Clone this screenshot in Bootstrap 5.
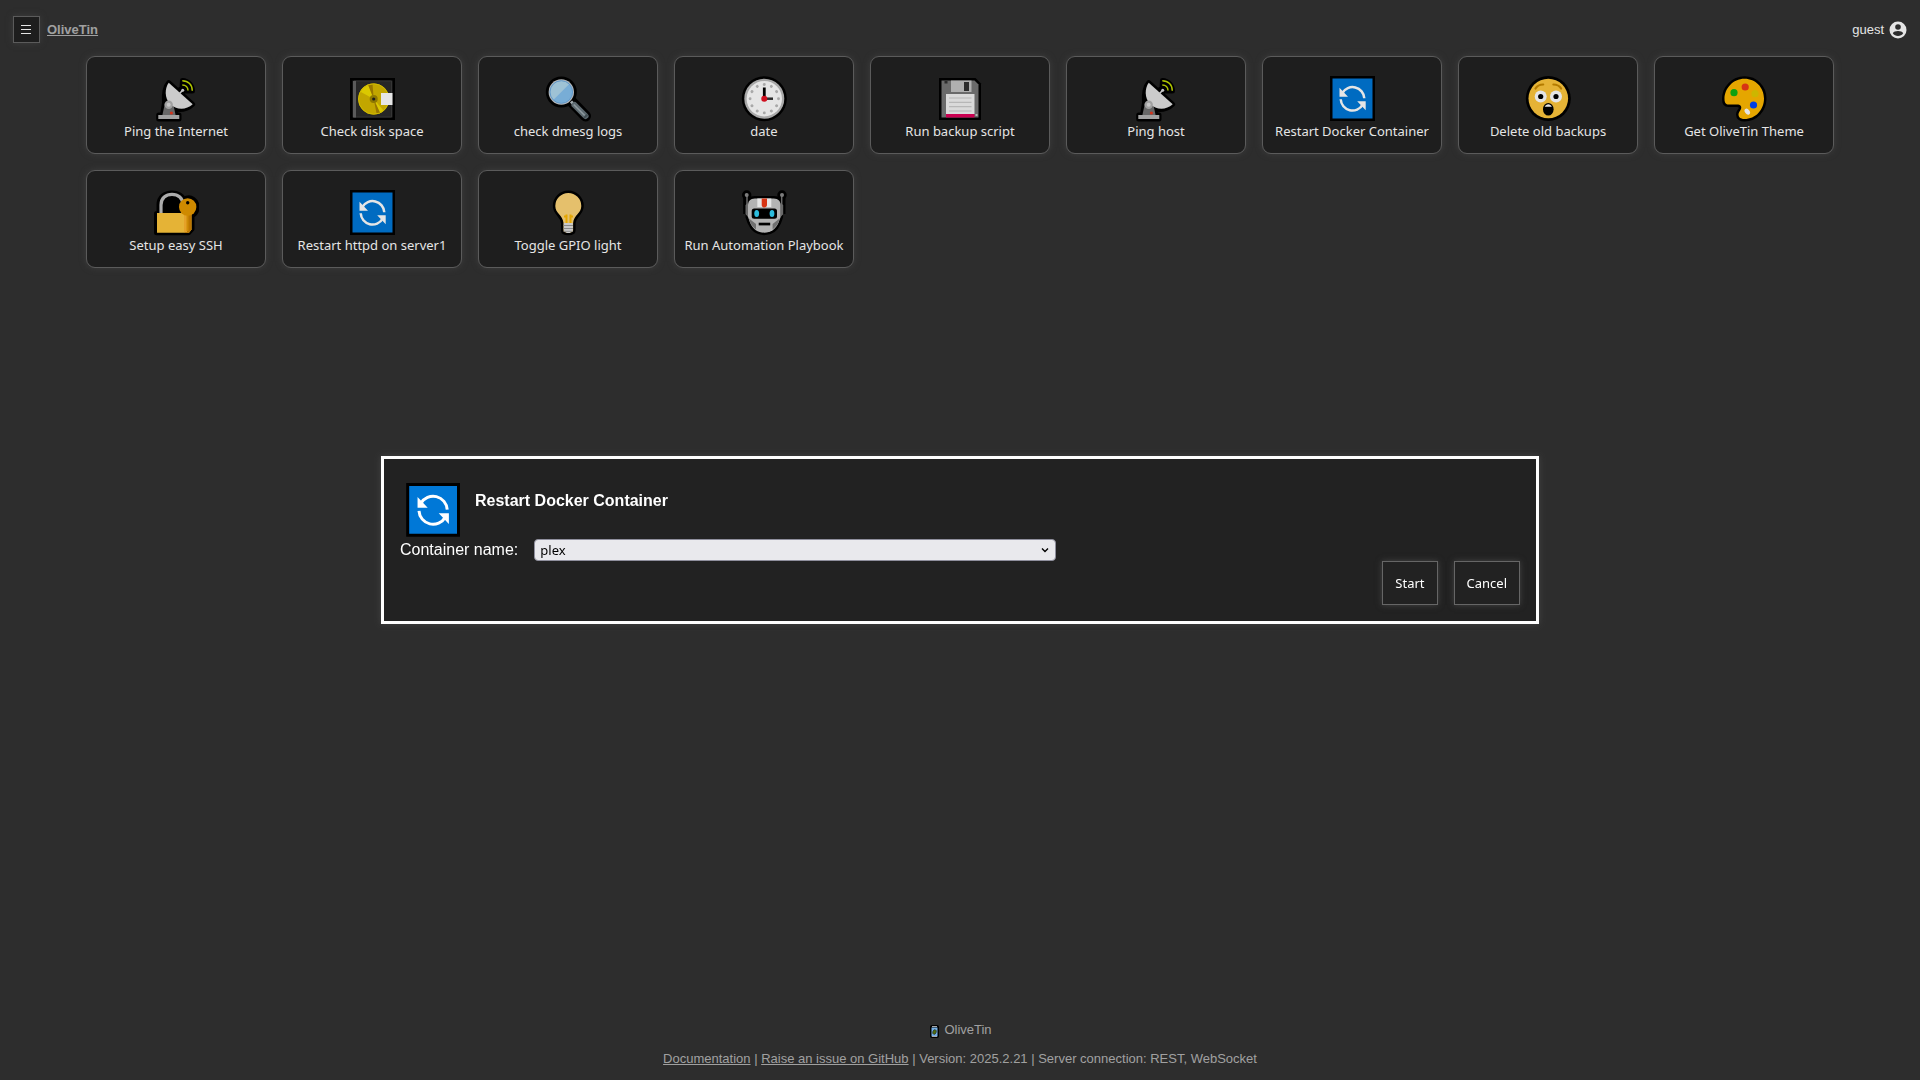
<!DOCTYPE html>
<html lang="en">
<head>
<meta charset="utf-8">
<meta name="viewport" content="width=device-width, initial-scale=1">
<title>OliveTin</title>
<link href="https://cdn.jsdelivr.net/npm/bootstrap@5.3.0/dist/css/bootstrap.min.css" rel="stylesheet">
<style>
  body { background: #333; color: #fff; font: 13px/16px "Liberation Sans", Arial, sans-serif; }
  .site-head { padding: 16px 13px 13px; }
  .ot-btn { background: #222; color: #fff; border: 1px solid #666; box-shadow: 0 0 6px #444; font: 13px/18px "Noto Sans", sans-serif; }
  .menu-btn { width: 27px; height: 27px; padding: 0; }
  .home-group { gap: 7px; }
  .home-link { color: #b3b3b3; }
  .user-info { color: #fff; gap: 5px; }
  .action-grid { display: grid; grid-template-columns: repeat(auto-fill, 180px); gap: 16px; justify-content: center; }
  .action-btn { border-radius: 9px; padding: 19px 4px 13px; }
  .action-btn svg { width: 46px; height: 46px; }
  .page-foot { color: #b3b3b3; padding-bottom: 13px; }
  .page-foot p { margin: 0 0 13px; }
  .page-foot p:last-child { margin: 0; }
  .page-foot a { color: inherit; }
  .dim-layer { background: rgba(0,0,0,.1); }
  .arg-dialog { width: 1158px; max-width: 100%; background: #222; border: 3px solid #fff; box-shadow: 0 0 6px #444; padding: 16px; }
  .dialog-icon { width: 55px; height: 55px; margin: 8px 15px 1px 5px; }
  .arg-dialog h2 { font-size: 16px; line-height: 20px; font-weight: 700; margin: 16px 0 0; }
  .arg-dialog label { font-size: 16px; line-height: 22px; }
  .arg-select {
    width: 522px; height: 22px; padding: 0 20px 0 5px; font: 13px/20px "Noto Sans", sans-serif; color: #000;
    border: 1px solid #8f8f9d; border-radius: 4px; background-color: #e9e9ed; background-position: right 6px center; background-size: 8px 8px;
    --bs-form-select-bg-img: url("data:image/svg+xml,%3Csvg xmlns='http://www.w3.org/2000/svg' viewBox='0 0 8 8'%3E%3Cpath d='M1 2.5l3 3 3-3' fill='none' stroke='%23000' stroke-width='1.4'/%3E%3C/svg%3E");
  }
  .dialog-btn { padding: 12px; }
</style>
<script src="https://cdn.jsdelivr.net/npm/bootstrap@5.3.0/dist/js/bootstrap.bundle.min.js"></script>
</head>
<body class="d-flex flex-column min-vh-100">

<svg class="d-none" aria-hidden="true">
  <symbol id="ic-dish" viewBox="0 0 46 46">
    <g stroke="#000" stroke-width="5" stroke-linejoin="round" fill="#000">
      <path d="M15.7 6.7 39.7 28.3C34 34 27 34 22 33.3L23 39H26v4H5.700v-4H9.500l2-12C11 20 11 12 15.700 6.700z"/>
      <path d="M29.500 4.500A10.500 10.500 0 0 1 39.500 15H31l-4 4-3-3 5-4z"/>
    </g>
    <path d="M12 27h8l2.700 12.500H9.300z" fill="#737373"/>
    <path d="M5.300 39h21v4h-21z" fill="#b5b5b5"/>
    <path d="M15.700 6.700 39.700 28.300C33 34.500 23 34 17 28 11.500 22 11.500 12.500 15.700 6.700z" fill="#e2e2e2"/>
    <circle cx="15.700" cy="28.700" r="4.200" fill="#b4b4b4"/><circle cx="15.700" cy="28.700" r="2" fill="#dedede"/>
    <circle cx="18.400" cy="37" r="1.600" fill="#e83a22"/>
    <path d="m26.500 17.500 3-3" stroke="#ddd" stroke-width="1.600"/><circle cx="29.700" cy="14.300" r="1.500" fill="#ddd"/>
    <path d="M29.300 4.800c6 0 10 4 10 10M29.300 8.900c3.500 0 5.700 2.400 5.700 5.600" fill="none" stroke="#c3dc00" stroke-width="1.500"/>
  </symbol>
  <symbol id="ic-sync" viewBox="0 0 46 46">
    <path d="M1 0h45v45H1z"/><path d="M3.500 2.500h40v40h-40z" fill="#0078d7"/>
    <path d="M13.300 17A11.800 11.800 0 0 1 35.300 22.300M11.700 23.300A11.800 11.800 0 0 0 33.700 28.600" fill="none" stroke="#fff" stroke-width="2.500"/>
    <path d="M10.500 11.800v8.900h8.500zM36.700 34.200v-8.900h-8.500z" fill="#fff"/>
  </symbol>
</svg>

<header class="site-head d-flex justify-content-between align-items-center">
  <div class="home-group d-flex align-items-center">
    <button class="ot-btn menu-btn d-flex align-items-center justify-content-center" type="button" aria-label="Open menu">
      <svg width="11" height="11" viewBox="0 0 11 11" stroke="#fff" aria-hidden="true"><path d="M0 1.500h10M0 5.500h10M0 9.500h10"/></svg>
    </button>
    <a class="home-link fw-bold" href="#">OliveTin</a>
  </div>
  <div class="user-info d-flex align-items-center">
    <span>guest</span>
    <svg width="18" height="18" viewBox="0 0 18 18" aria-hidden="true"><circle cx="9" cy="9" r="8.500" fill="#fff"/><circle cx="9" cy="6" r="2.800" fill="#333"/><path d="M3.800 12.300c1.200-3 9.200-3 10.400 0-2.200 3.500-8.200 3.500-10.400 0z" fill="#333"/></svg>
  </div>
</header>

<main class="flex-grow-1">
  <div class="action-grid">
    <button class="ot-btn action-btn d-flex flex-column align-items-center" type="button"><svg aria-hidden="true"><use href="#ic-dish"/></svg><span>Ping the Internet</span></button>

    <button class="ot-btn action-btn d-flex flex-column align-items-center" type="button">
      <svg viewBox="0 0 46 46" aria-hidden="true">
        <path d="M1 2h45v42H1z"/><path d="M3.500 4.500h40v37h-40z" fill="#2b2b2b"/><path d="M5 5h37.500v36H5z" fill="none" stroke="#3c3c3c"/><path d="M4 5h3v36.500H4z" fill="#666"/>
        <circle cx="24.700" cy="23" r="15.500" fill="#d9b900"/>
        <path d="M24.700 23 11 15.500A15.500 15.500 0 0 1 19 8.600zM24.700 23l6 14.300a15.500 15.500 0 0 0 4-2.500z" fill="#f4df00"/>
        <path d="M24.700 23 19 8.600a15.500 15.500 0 0 1 4.500-1zM24.700 23l3 15.300 3.500-1.200z" fill="#aa8400"/>
        <circle cx="24.700" cy="23" r="15.200" fill="none" stroke="#e8d100"/>
        <circle cx="24.700" cy="23" r="4" fill="#9f8600"/><circle cx="24.700" cy="23" r="1.600" fill="#222"/>
        <path d="M32 17h11.500v12H32z" fill="#fff"/>
      </svg><span>Check disk space</span></button>

    <button class="ot-btn action-btn d-flex flex-column align-items-center" type="button">
      <svg viewBox="0 0 46 46" aria-hidden="true">
        <path d="m26 25 14.500 15" stroke="#000" stroke-width="11" stroke-linecap="round"/><circle cx="16.300" cy="16" r="15.500"/>
        <circle cx="16.300" cy="16" r="12.700" fill="#c9cdd0"/><circle cx="16.300" cy="16" r="11.300" fill="#86c1ef"/>
        <path d="M8.300 24A11.300 11.300 0 0 1 24.300 8z" fill="#b0d8ee"/><circle cx="16.300" cy="16" r="11.300" fill="none" stroke="#6daae0"/>
        <path d="m26 25.500 3 3" stroke="#b5bfc4" stroke-width="3"/><path d="M29.500 29 40.500 40" stroke="#67757c" stroke-width="6" stroke-linecap="round"/><path d="m28.700 28.500 11 11" stroke="#9daab0" stroke-width="1.700"/><path d="m39 42 3.500-3.500" stroke="#49565c" stroke-width="2"/>
      </svg><span>check dmesg logs</span></button>

    <button class="ot-btn action-btn d-flex flex-column align-items-center" type="button">
      <svg viewBox="0 0 46 46" aria-hidden="true">
        <circle cx="23.300" cy="22.700" r="22.500"/><circle cx="23.300" cy="22.700" r="20" fill="#bbb"/><circle cx="23.300" cy="22.700" r="17.700" fill="#fff"/>
        <circle cx="23.300" cy="22.700" r="14.200" fill="none" stroke="#bbb" stroke-width="2.900" stroke-linecap="round" pathLength="120" stroke-dasharray="0.010 9.990"/>
        <path d="M23.300 22.700V11.500" stroke="#000" stroke-width="2.800"/><path d="M23.300 22.700h8.700" stroke="#333" stroke-width="2.500"/><circle cx="23.300" cy="22.700" r="3" fill="#e81123"/>
      </svg><span>date</span></button>

    <button class="ot-btn action-btn d-flex flex-column align-items-center" type="button">
      <svg viewBox="0 0 46 46" aria-hidden="true">
        <path d="M2 2h36.500L44 7.500V44H2z"/><path d="M4.500 4.500h33l4 4v33h-37z" fill="#777"/><path d="M7.500 5h3v2.500h-3z" fill="#333"/>
        <path d="M14 4.500h20.500V16H14z" fill="#c4c4c4"/><path d="M27 6h5v9h-5z" fill="#333"/>
        <path d="M9 18h28.500v20H9z" fill="#f3f3f3"/><path d="M12 22h22.500M12 26.300h22.500M12 30.600h22.500M12 35h22.500" stroke="#ccc" stroke-width="1.200"/>
        <path d="M9 38h28.500v3.500H9z" fill="#e3005b"/><path d="M38.500 38h2v2h-2z" fill="#ccc"/>
      </svg><span>Run backup script</span></button>

    <button class="ot-btn action-btn d-flex flex-column align-items-center" type="button"><svg aria-hidden="true"><use href="#ic-dish"/></svg><span>Ping host</span></button>
    <button class="ot-btn action-btn d-flex flex-column align-items-center" type="button"><svg aria-hidden="true"><use href="#ic-sync"/></svg><span>Restart Docker Container</span></button>

    <button class="ot-btn action-btn d-flex flex-column align-items-center" type="button">
      <svg viewBox="0 0 46 46" aria-hidden="true">
        <circle cx="23.300" cy="22.500" r="22.500"/><circle cx="23.300" cy="22.500" r="19.800" fill="#ffc83d"/>
        <path d="M10.500 12.500c1.500-2.500 4-4 7.700-4M36.100 12.500c-1.500-2.500-4-4-7.700-4" fill="none" stroke="#c98a00" stroke-width="2.200" stroke-linecap="round"/>
        <circle cx="15.700" cy="20.500" r="6" fill="#fff"/><circle cx="31" cy="20.500" r="6" fill="#fff"/><circle cx="15.700" cy="20.500" r="2.600"/><circle cx="31" cy="20.500" r="2.600"/>
        <ellipse cx="23.300" cy="33.300" rx="5.300" ry="6.300"/><path d="M19.700 30.800c1.500-3.500 5.700-3.500 7.200 0z" fill="#fff"/>
      </svg><span>Delete old backups</span></button>

    <button class="ot-btn action-btn d-flex flex-column align-items-center" type="button">
      <svg viewBox="0 0 46 46" aria-hidden="true">
        <path d="M23.500 2.800C12 2.800 3.500 12.500 3.500 23c0 4 1.500 5.500 4 5.500h8.500c3.500 0 5 2 4 4.500-1 2.200-2.500 3-2.500 5.500 0 3 2.500 4.500 6 4.500 11 0 19.500-9 19.500-20.500C43 11.500 34.500 2.800 23.500 2.800z" fill="#ffb900" stroke="#000" stroke-width="5" paint-order="stroke"/>
        <circle cx="13" cy="16.700" r="3.600" fill="#13b313"/><circle cx="24.200" cy="11" r="3.600" fill="#f03a17"/><circle cx="34" cy="17.700" r="3.600" fill="#e5cb00"/><circle cx="32.500" cy="29" r="3.600" fill="#0046ff"/><ellipse cx="26.300" cy="35.700" rx="2.300" ry="3.300" transform="rotate(-38 26.300 35.700)" fill="#fff"/>
      </svg><span>Get OliveTin Theme</span></button>

    <button class="ot-btn action-btn d-flex flex-column align-items-center" type="button">
      <svg viewBox="0 0 46 46" aria-hidden="true">
        <path d="M3.500 23.500H6V15C6 7 12 3 19 3c6 0 10.500 3 12 6.500C38 5 44 11 44 17c0 4-2 7-5 8.500V39L35.500 42.700h-32z" stroke="#000" stroke-width="5" stroke-linejoin="round"/>
        <path d="M8 24v-9C8 8 13 4.300 19 4.300S30 8 30 15v9" fill="none" stroke="#bfbfbf" stroke-width="3.200"/>
        <path d="M4 23h34.500v16.500L36 42.700H4z" fill="#ffc83d"/><path d="M32 23h6.500v16.500L36 42.700h-4z" fill="#d18300"/><path d="M31 22h3v20h-3z" fill="#ffb52e"/><path d="M34.500 24v17" stroke="#e79c09" stroke-width="2"/>
        <circle cx="34.700" cy="17" r="8.700" fill="#e79a00"/><circle cx="34.700" cy="12.700" r="1.700"/>
      </svg><span>Setup easy SSH</span></button>

    <button class="ot-btn action-btn d-flex flex-column align-items-center" type="button"><svg aria-hidden="true"><use href="#ic-sync"/></svg><span>Restart httpd on server1</span></button>

    <button class="ot-btn action-btn d-flex flex-column align-items-center" type="button">
      <svg viewBox="0 0 46 46" aria-hidden="true">
        <path d="M23.300 3a13 13 0 0 0-13 13c0 7.500 7.500 9 8.200 17v7.500c0 3 9.600 3 9.600 0V33c.7-8 8.200-9.500 8.200-17a13 13 0 0 0-13-13z" fill="#ffd679" stroke="#000" stroke-width="5" paint-order="stroke"/>
        <path d="M21.500 33v-7.500M25.500 33v-7.500M19 26.500h2.500v-2M28 26.500h-2.500v-2" fill="none" stroke="#ffb900" stroke-width="2"/>
        <path d="M18.800 33h9v7.500l-3 2.500h-3l-3-2.500z" fill="#e0e0e0"/><path d="M18.500 35.500h9.500M18.500 38.500h9.500M18.500 41.300h9.500" stroke="#999"/>
      </svg><span>Toggle GPIO light</span></button>

    <button class="ot-btn action-btn d-flex flex-column align-items-center" type="button">
      <svg viewBox="0 0 46 46" aria-hidden="true">
        <path d="M14 8.500h18.600c5 0 7 3 7 7V27l-2 5.500c-3 7-8 10.200-14.300 10.200S12 39.500 9 32.500L7 27V15.500c0-4 2-7 7-7z" stroke="#000" stroke-width="5"/>
        <path d="M5.700 5v19M41 5v19" stroke="#000" stroke-width="7"/><circle cx="5.700" cy="5" r="4.700"/><circle cx="41" cy="5" r="4.700"/>
        <path d="M6 5v20M40.700 5v20" stroke="#767676" stroke-width="1.500"/><path d="m4.500 15 2.500-2v14l-2.500-3zM42.200 15l-2.500-2v14l2.500-3z" fill="#767676"/><circle cx="5.700" cy="5" r="2" fill="#8b8b8b"/><circle cx="41" cy="5" r="2" fill="#8b8b8b"/>
        <path d="M14 8.500h18.600c5 0 7 3 7 7V27l-2 5.500c-3 7-8 10.200-14.300 10.200S12 39.500 9 32.500L7 27V15.500c0-4 2-7 7-7z" fill="#c8c8c8"/>
        <path d="m8 28.500 7 5.500v5.500c-3-2.500-6-5.500-7-11zM38.600 28.500l-7 5.500v5.500c3-2.500 6-5.500 7-11z" fill="#7d7d7d"/>
        <path d="M16.300 8.500h14V17h-14z" fill="#fff"/><path d="M20.700 8.500H26V15c0 3.300-5.300 3.300-5.300 0z" fill="#f03a17"/>
        <rect x="10.700" y="18.500" width="25.300" height="10.300" rx="2.500"/><ellipse cx="15.700" cy="23.500" rx="2.400" ry="3.500" fill="#31d2f7"/><ellipse cx="31" cy="23.500" rx="2.400" ry="3.500" fill="#31d2f7"/><path d="M17.700 32.700h11.500v2.700H17.700z"/>
      </svg><span>Run Automation Playbook</span></button>
  </div>
</main>

<footer class="page-foot text-center">
  <p class="d-flex justify-content-center align-items-center">
    <svg class="me-1" width="12" height="15" viewBox="0 0 12 15" aria-hidden="true"><rect x="2" y="2" width="9" height="13" rx="2"/><path d="M3.500 4.500h6v9h-6z" fill="#84c5ff"/><path d="M4 3.500h5M4 13.500h5" stroke="#bbb"/><ellipse cx="6.500" cy="9" rx="1.700" ry="2.400" fill="#5a7d10" stroke="#222" stroke-width=".6" transform="rotate(20 6.500 9)"/></svg>
    OliveTin
  </p>
  <p><a href="#">Documentation</a> | <a href="#">Raise an issue on GitHub</a> | Version: 2025.2.21 | Server connection: REST, WebSocket</p>
</footer>

<div class="dim-layer position-fixed top-0 start-0 w-100 h-100 d-flex align-items-center justify-content-center">
  <form class="arg-dialog" role="dialog" aria-labelledby="dialog-title">
    <div class="d-flex align-items-start">
      <svg class="dialog-icon" aria-hidden="true"><use href="#ic-sync"/></svg>
      <h2 id="dialog-title">Restart Docker Container</h2>
    </div>
    <div class="d-flex gap-3">
      <label for="container-name">Container name:</label>
      <select class="form-select arg-select" id="container-name"><option>plex</option></select>
    </div>
    <div class="d-flex justify-content-end gap-3">
      <button class="ot-btn dialog-btn" type="button">Start</button>
      <button class="ot-btn dialog-btn" type="button">Cancel</button>
    </div>
  </form>
</div>
</body>
</html>
